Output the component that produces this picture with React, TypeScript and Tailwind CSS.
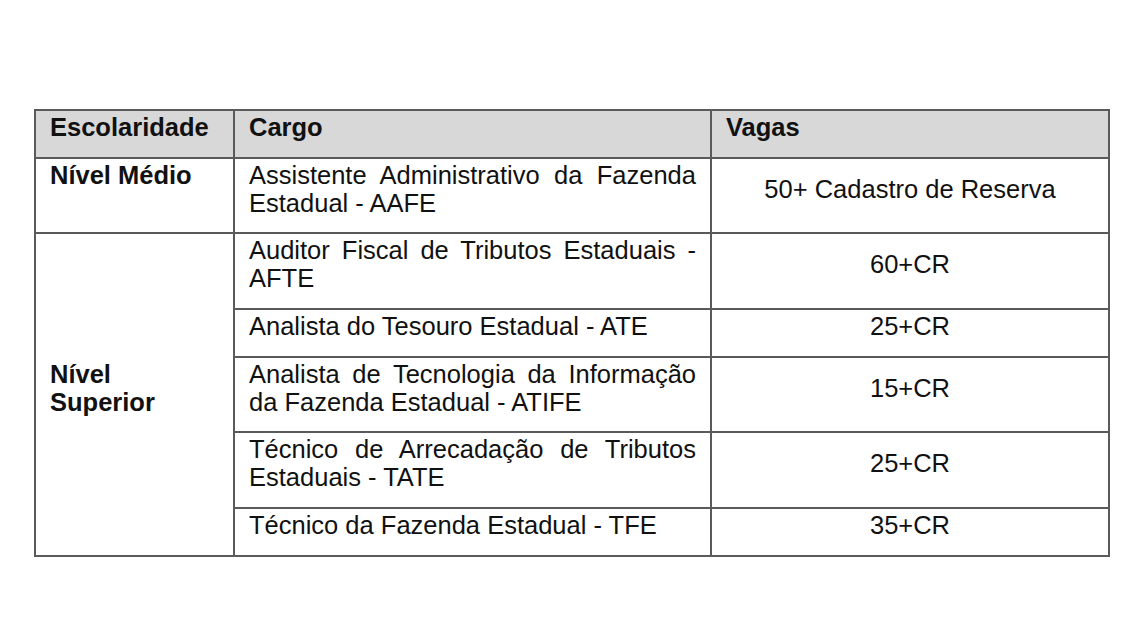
import React from 'react';

const rows = [
  { cargo: 'Auditor Fiscal de Tributos Estaduais - AFTE', vagas: '60+CR' },
  { cargo: 'Analista do Tesouro Estadual - ATE', vagas: '25+CR' },
  { cargo: 'Analista de Tecnologia da Informação da Fazenda Estadual - ATIFE', vagas: '15+CR' },
  { cargo: 'Técnico de Arrecadação de Tributos Estaduais - TATE', vagas: '25+CR' },
  { cargo: 'Técnico da Fazenda Estadual - TFE', vagas: '35+CR' },
];

const cell = 'border-2 border-[#5a5a5a] pl-[14px] pr-[14px] pt-[2px] pb-[15.7px]';

export default function App() {
  return (
    <div
      className="w-[1136px] h-[640px] bg-white pt-[109px] pl-[34px] text-[#111] text-[25.5px] leading-[28px]"
      style={{ fontFamily: '"Liberation Sans", Arial, sans-serif' }}
    >
      <table className="border-collapse table-fixed w-[1074px]">
        <colgroup>
          <col className="w-[199px]" />
          <col className="w-[477px]" />
          <col className="w-[398px]" />
        </colgroup>
        <thead>
          <tr className="bg-[#d8d8d8] font-bold">
            <th className={`${cell} text-left align-top font-bold`}>Escolaridade</th>
            <th className={`${cell} text-left align-top font-bold`}>Cargo</th>
            <th className={`${cell} text-left align-top font-bold`}>Vagas</th>
          </tr>
        </thead>
        <tbody>
          <tr>
            <td className={`${cell} align-top font-bold`}>Nível Médio</td>
            <td className={`${cell} align-top text-justify`}>
              Assistente Administrativo da Fazenda Estadual - AAFE
            </td>
            <td className={`${cell} align-middle text-center`}>50+ Cadastro de Reserva</td>
          </tr>
          {rows.map((r, i) => (
            <tr key={r.cargo}>
              {i === 0 && (
                <td rowSpan={rows.length} className={`${cell} align-middle font-bold`}>
                  Nível
                  <br />
                  Superior
                </td>
              )}
              <td className={`${cell} align-top text-justify`}>{r.cargo}</td>
              <td className={`${cell} align-middle text-center`}>{r.vagas}</td>
            </tr>
          ))}
        </tbody>
      </table>
    </div>
  );
}
